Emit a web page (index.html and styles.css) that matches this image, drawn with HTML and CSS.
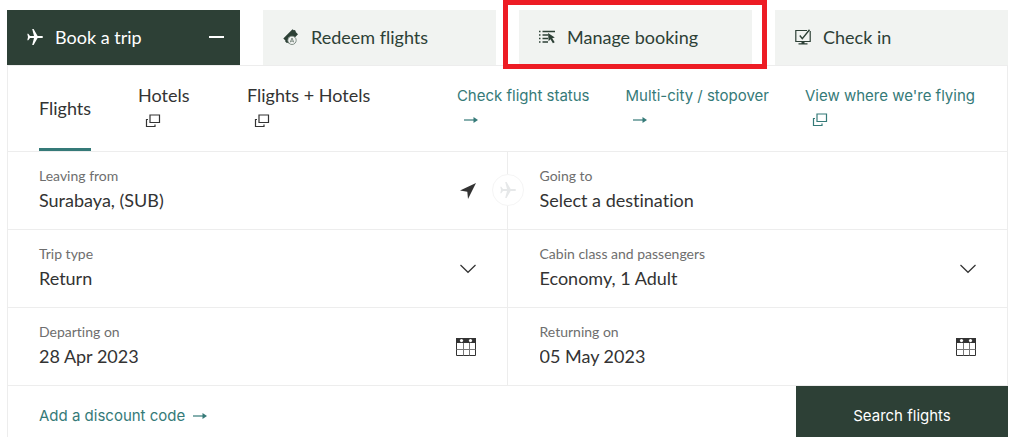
FILE: index.html
```html
<!DOCTYPE html>
<html lang="en">
<head>
    <meta charset="UTF-8">
    <meta name="viewport" content="width=device-width, initial-scale=1.0">
    <title>Book a trip</title>
    <link rel="stylesheet" href="styles.css">
</head>
<body>
    <svg class="sprite" aria-hidden="true">
        <symbol id="plane" viewBox="0 0 16 16">
            <path d="M16 8c0-.6-.7-1-1.600-1H10.600L6.600 0H5.200L7 7H3L1.300 4.800H.3L1 8l-.7 3.200h1L3 9h4l-1.800 7h1.400l4-7h3.800c.9 0 1.600-.4 1.600-1z" fill="currentColor"/>
        </symbol>
        <symbol id="windows" viewBox="0 0 16 14">
            <path d="M5 1h9.500v7.500H5zM3 5.500H1.500V12.500H10V10.500" fill="none" stroke="currentColor" stroke-width="1.200"/>
        </symbol>
        <symbol id="arrow" viewBox="0 0 14 8">
            <path d="M0 4h11" stroke="currentColor" stroke-width="1.200"/>
            <path d="M9.500 1L14 4L9.500 7z" fill="currentColor"/>
        </symbol>
        <symbol id="chevron" viewBox="0 0 16 10">
            <path d="M.5 1L8 8.300L15.500 1" fill="none" stroke="currentColor" stroke-width="1.200"/>
        </symbol>
        <symbol id="calendar" viewBox="0 0 20 18">
            <path d="M.5.500h19v17H.5z" fill="none" stroke="currentColor"/>
            <path d="M.5 11.500h19M7.500 5v12.500M13.500 5v12.500" fill="none" stroke="#777"/>
            <path d="M0 0h20v5H0z" fill="currentColor"/>
            <circle cx="5.500" cy="2.600" r="1.600" fill="#fff"/>
            <circle cx="14.500" cy="2.600" r="1.600" fill="#fff"/>
        </symbol>
    </svg>

    <main class="booking">
        <div class="tabs">
            <button type="button" class="tab active">
                <svg class="tab-icon"><use href="#plane"/></svg>
                <span>Book a trip</span>
                <span class="minus"></span>
            </button>
            <button type="button" class="tab">
                <svg class="tab-icon" viewBox="0 0 16 16">
                    <path d="M9.500.2l1.300 1.100.9-.2 1 1 0 .9 2.300 2.200-9 9.300-1.300-.8-.9.300-1.600-1.500.2-.9L.3 9.600z" fill="currentColor"/>
                    <circle cx="9" cy="11.300" r="4.200" fill="#f1f3f1" stroke="#66756c" stroke-width=".8"/>
                    <path d="M7.200 13.400L9 9l1.800 4.400M7.900 12.200h2.200" fill="none" stroke="#66756c" stroke-width=".8"/>
                </svg>
                <span>Redeem flights</span>
            </button>
            <div class="tab-highlight">
                <button type="button" class="tab">
                    <svg class="tab-icon" viewBox="0 0 16 16">
                        <path d="M0 2.500h1.500M0 6h1.500M0 9.500h1.500M0 13h1.500M3.500 2.500H16M3.500 6H9M3.500 9.500H9M3.500 13H9" stroke="currentColor" stroke-width="1.500"/>
                        <path d="M9 4l6.800 4.400-2.600.8 2.500 4.100-1.800 1-2.400-4-1.900 2z" fill="currentColor"/>
                    </svg>
                    <span>Manage booking</span>
                </button>
            </div>
            <button type="button" class="tab">
                <svg class="tab-icon" viewBox="0 0 16 16">
                    <path d="M12 1.500H.8v11h14.400V2" fill="none" stroke="currentColor" stroke-width="1.200"/>
                    <path d="M4.800 6.500l2.500 3.200L14.500.700" fill="none" stroke="currentColor" stroke-width="1.400"/>
                    <path d="M6.500 12.500h3v1.700h-3zM3.500 14.300h9v1.200h-9z" fill="currentColor"/>
                </svg>
                <span>Check in</span>
            </button>
        </div>

        <form class="panel">
            <div class="subnav">
                <nav class="products">
                    <a href="#" class="product current">Flights</a>
                    <a href="#" class="product">Hotels <svg class="icon-windows"><use href="#windows"/></svg></a>
                    <a href="#" class="product">Flights + Hotels <svg class="icon-windows"><use href="#windows"/></svg></a>
                </nav>
                <nav class="links">
                    <a href="#" class="link">Check flight status <svg class="icon-arrow"><use href="#arrow"/></svg></a>
                    <a href="#" class="link">Multi-city / stopover <svg class="icon-arrow"><use href="#arrow"/></svg></a>
                    <a href="#" class="link">View where we're flying <svg class="icon-windows"><use href="#windows"/></svg></a>
                </nav>
            </div>

            <div class="fields">
                <div class="field">
                    <div class="field-text">
                        <label for="from">Leaving from</label>
                        <input type="text" id="from" value="Surabaya, (SUB)">
                    </div>
                    <svg class="icon-locate" viewBox="0 0 16 16"><path d="M16 0L8 16 7.300 8.700 0 7.500z" fill="currentColor"/></svg>
                </div>
                <div class="field">
                    <div class="field-text">
                        <label for="to">Going to</label>
                        <input type="text" id="to" placeholder="Select a destination">
                    </div>
                </div>
                <div class="field">
                    <div class="field-text">
                        <label for="trip">Trip type</label>
                        <select id="trip">
                            <option>Return</option>
                        </select>
                    </div>
                    <svg class="icon-chevron"><use href="#chevron"/></svg>
                </div>
                <div class="field">
                    <div class="field-text">
                        <label for="cabin">Cabin class and passengers</label>
                        <select id="cabin">
                            <option>Economy, 1 Adult</option>
                        </select>
                    </div>
                    <svg class="icon-chevron"><use href="#chevron"/></svg>
                </div>
                <div class="field">
                    <div class="field-text">
                        <label for="depart">Departing on</label>
                        <input type="text" id="depart" value="28 Apr 2023">
                    </div>
                    <svg class="icon-calendar"><use href="#calendar"/></svg>
                </div>
                <div class="field">
                    <div class="field-text">
                        <label for="return">Returning on</label>
                        <input type="text" id="return" value="05 May 2023">
                    </div>
                    <svg class="icon-calendar"><use href="#calendar"/></svg>
                </div>
                <button type="button" class="swap" aria-label="Swap">
                    <svg class="icon-plane"><use href="#plane"/></svg>
                </button>
            </div>

            <div class="actions">
                <a href="#" class="discount">Add a discount code <svg class="icon-arrow"><use href="#arrow"/></svg></a>
                <button type="submit" class="search-btn">Search flights</button>
            </div>
        </form>
    </main>
</body>
</html>
```

FILE: styles.css
```css
* {
    box-sizing: border-box;
}

body {
    margin: 0;
    background: #fff;
    color: #333;
    font-family: Lato, sans-serif;
    font-size: 18px;
    line-height: 24px;
    font-variant-ligatures: none;
}

button, input, select {
    font: inherit;
    font-variant-ligatures: none;
    color: inherit;
}

a {
    text-decoration: none;
}

svg {
    display: block;
    flex: none;
}

.sprite {
    position: absolute;
    width: 0;
    height: 0;
}

.booking {
    padding: 10px 16px 0 7px;
}

.tabs {
    display: grid;
    grid-template-columns: repeat(4, 1fr);
    gap: 23px;
}

.tab {
    display: flex;
    align-items: center;
    gap: 12px;
    width: 100%;
    height: 55px;
    padding: 0 16px 2px 20px;
    border: none;
    background: #f1f3f1;
    color: #2d4036;
    cursor: pointer;
}

.tab.active {
    background: #2d4036;
    color: #fff;
}

.tab-icon {
    width: 16px;
    height: 16px;
}

.minus {
    width: 15px;
    height: 2px;
    margin-left: auto;
    background: #fff;
}

.tab-highlight {
    position: relative;
}

.tab-highlight::after {
    content: "";
    position: absolute;
    inset: -10px -15px -4px -16px;
    border: 5px solid #ed1c24;
    pointer-events: none;
}

.panel {
    border: 1px solid #ededed;
    border-bottom: none;
}

.subnav {
    display: flex;
    justify-content: space-between;
    height: 86px;
    padding: 0 32px 0 31px;
    border-bottom: 1px solid #ededed;
}

.products {
    display: grid;
    grid-template-columns: 99px 109px auto;
}

.product {
    padding-top: 17px;
    color: #333;
    white-space: nowrap;
}

.product.current {
    justify-self: start;
    padding-top: 30px;
    border-bottom: 3px solid #357a78;
}

.links {
    display: flex;
    gap: 36px;
}

.link {
    padding-top: 18px;
}

.link, .discount, .search-btn {
    font-family: Inter, "Liberation Sans", sans-serif;
    font-size: 15px;
}

.link, .discount {
    color: #357a78;
    white-space: nowrap;
}

.icon-windows {
    width: 16px;
    height: 14px;
    margin: 7px 0 0 7px;
}

.icon-arrow {
    width: 14px;
    height: 8px;
}

.link .icon-windows {
    margin-top: 5px;
}

.link .icon-arrow {
    margin: 8px 0 0 7px;
}

.fields {
    position: relative;
    display: grid;
    grid-template-columns: 1fr 1fr;
}

.field {
    display: flex;
    align-items: center;
    height: 78px;
    padding: 0 31px;
    border-bottom: 1px solid #ededed;
}

.field:nth-child(odd) {
    border-right: 1px solid #ededed;
}

.field:nth-child(even) {
    padding-left: 32px;
}

.field-text {
    flex: 1;
    min-width: 0;
    padding-bottom: 4px;
}

.field label {
    display: block;
    color: #6e6e6e;
    font-size: 14px;
    line-height: 22px;
}

.field input, .field select {
    display: block;
    width: 100%;
    height: 26px;
    padding: 0;
    border: none;
    outline: none;
    background: none;
    appearance: none;
}

.field input::placeholder {
    color: inherit;
    opacity: 1;
}

.icon-locate {
    width: 16px;
    height: 16px;
}

.icon-chevron {
    width: 16px;
    height: 10px;
}

.icon-calendar {
    width: 20px;
    height: 18px;
}

.swap {
    position: absolute;
    top: 22px;
    left: 50%;
    display: flex;
    align-items: center;
    justify-content: center;
    width: 32px;
    height: 32px;
    padding: 0;
    border: 1px solid #f5f5f5;
    border-radius: 50%;
    background: #fff;
    color: #e6e8e9;
    transform: translateX(-50%);
}

.icon-plane {
    width: 16px;
    height: 18px;
}

.actions {
    display: flex;
    justify-content: space-between;
    height: 52px;
    padding-left: 31px;
}

.discount {
    display: flex;
    align-items: center;
    gap: 8px;
    padding-top: 8px;
}

.search-btn {
    width: 212px;
    margin-right: -1px;
    padding: 8px 0 0;
    border: none;
    background: #2d4036;
    color: #fff;
    cursor: pointer;
}
```
